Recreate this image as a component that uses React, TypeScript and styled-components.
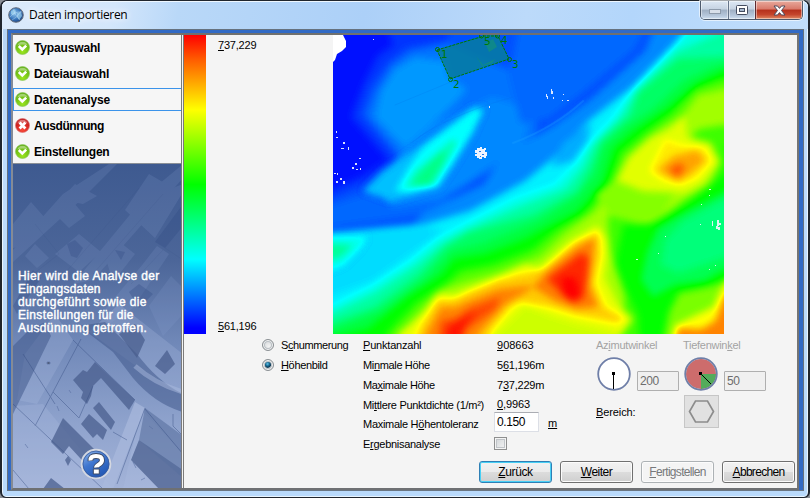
import React from "react";
import styled, { createGlobalStyle } from "styled-components";

const GlobalStyle = createGlobalStyle`
  html, body { margin: 0; padding: 0; overflow: hidden; background: #8a8f96; }
  * { box-sizing: border-box; }
`;

const Window = styled.div`
  width: 810px;
  height: 498px;
  display: flex;
  flex-direction: column;
  border: 2px solid #20262e;
  border-bottom-width: 1px;
  border-top-width: 1px;
  border-radius: 7px 7px 6px 6px;
  background: linear-gradient(180deg, #b4d3f4 0, #bfdcfb 150px, #b9dafc 100%);
  box-shadow: inset 0 0 0 1px #e9f5ff;
  padding: 0 4px 6px 5px;
  font-family: "Liberation Sans", Arial, sans-serif;
  font-size: 11px;
  color: #000;
`;

const TitleBar = styled.header`
  height: 28px;
  flex: none;
  display: flex;
  align-items: flex-start;
  margin: 0 -4px 0 -5px;
  padding: 0 5px 0 6px;
  border-radius: 6px 6px 0 0;
  box-shadow: inset 0 1px 0 #eef7ff;
  background: linear-gradient(100deg, #dcebfb 0, #d3e6fb 14%, #b9d8f8 22%, #acd0f8 45%, #bcdafa 65%, #b3d6fb 78%, #c2defb 100%);
`;

const TitleIcon = styled.svg`
  margin-top: 6px;
  width: 16px;
  height: 16px;
`;

const Title = styled.h1`
  flex: 1;
  margin: 5px 0 0 5px;
  font: 400 12px/17px "Open Sans", "Noto Sans", sans-serif;
  letter-spacing: -0.3px;
  text-shadow: 0 0 6px #fff, 0 0 8px #fff;
`;

const Controls = styled.div`
  display: flex;
  height: 19px;
  border: 1px solid #4d5a6c;
  border-top: 0;
  border-radius: 0 0 5px 5px;
  overflow: hidden;
  box-shadow: 0 0 0 1px rgba(255, 255, 255, 0.6);
`;

const ControlButton = styled.button<{ $kind: "plain" | "close" }>`
  width: ${(p) => (p.$kind === "close" ? 47 : 27)}px;
  padding: 0;
  border: 0;
  border-left: 1px solid ${(p) => (p.$kind === "close" ? "#5d2a30" : "#66758a")};
  box-shadow: inset 0 0 0 1px rgba(255, 255, 255, 0.45);
  background: ${(p) =>
    p.$kind === "close"
      ? "linear-gradient(#e8a99c 0, #d9796a 45%, #b5301c 50%, #c4452c 75%, #e08a64 100%)"
      : "linear-gradient(#dde8f4 0, #c6d3e2 45%, #9fafc3 50%, #b5c6da 80%, #cfdff0 100%)"};
  display: flex;
  align-items: center;
  justify-content: center;
  &:first-child { border-left: 0; }
`;

const Frame = styled.div`
  flex: 1;
  min-height: 0;
  display: flex;
  border: 1px solid #66727f;
  border-bottom-color: #6a7683;
  background: #316ac5;
  padding: 3px 4px 0 3px;
`;

const Body = styled.main`
  flex: 1;
  display: flex;
  background: #f4f4f4;
  border: 2px solid #747474;
  border-top-color: #70706e;
  border-left: 2px solid #858b96;
  border-bottom: 2px solid #6e7073;
`;

const Sidebar = styled.aside`
  width: 171px;
  flex: none;
  display: flex;
  flex-direction: column;
  border-right: 3px double #7b7b7b;
`;

const StepList = styled.ul`
  margin: 0;
  padding: 0;
  list-style: none;
  height: 129px;
  background: #f6f6f6;
  border-bottom: 1px solid #8a8f96;
`;

const Step = styled.li<{ $active?: boolean }>`
  height: ${(p) => (p.$active ? 23 : 26)}px;
  margin: ${(p) => (p.$active ? "1px 0 2px" : "0")};
  padding-left: ${(p) => (p.$active ? 1 : 2)}px;
  padding-bottom: ${(p) => (p.$active ? 0 : 1)}px;
  display: flex;
  align-items: center;
  gap: 4px;
  border: 0 solid #3b93ea;
  border-width: ${(p) => (p.$active ? "1px 0 1px 1px" : "0")};
`;

const StepText = styled.span<{ $ls: number }>`
  font-weight: 700;
  font-size: 12px;
  line-height: 15px;
  padding-top: 1px;
  letter-spacing: ${(p) => p.$ls}px;
`;

const Aerial = styled.div`
  flex: 1;
  min-height: 0;
  display: grid;
  overflow: hidden;
  & > * { grid-area: 1 / 1; }
`;

const Hint = styled.div`
  z-index: 1;
  padding: 106px 0 9px 5px;
  display: flex;
  flex-direction: column;
  color: #fff;
  font-weight: 400;
  font-size: 12px;
  line-height: 13px;
  -webkit-text-stroke: 0.4px #fff;
`;

const HintLine = styled.span<{ $ls: number }>`
  white-space: nowrap;
  letter-spacing: ${(p) => p.$ls}px;
`;

const HelpIcon = styled.svg`
  margin: auto 0 0 62px;
  width: 32px;
  height: 32px;
`;

const Content = styled.section`
  flex: 1;
  display: flex;
  flex-direction: column;
`;

const Preview = styled.div`
  display: flex;
  height: 299px;
  flex: none;
`;

const Ramp = styled.div`
  width: 22px;
  background: linear-gradient(#f00 0, #ff5a00 8%, #ff0 25%, #0f0 50%, #0ff 75%, #00f 98%);
`;

const RampLabels = styled.div`
  width: 127px;
  padding: 3px 0 1px 12px;
  display: flex;
  flex-direction: column;
  justify-content: space-between;
  line-height: 14px;
`;

const Details = styled.div`
  flex: 1;
  display: flex;
  padding: 1px 0 0 78px;
`;

const Column = styled.div<{ $w: number }>`
  width: ${(p) => p.$w}px;
  flex: none;
  display: flex;
  flex-direction: column;
`;

const Row = styled.div<{ $h?: number; $outdent?: number }>`
  height: ${(p) => p.$h ?? 20}px;
  margin-left: ${(p) => -(p.$outdent ?? 0)}px;
  flex: none;
  display: flex;
  align-items: center;
`;

const Unit = styled.span`
  padding: 2px 0 0 9px;
`;

const Caption = styled.span<{ $ls?: number; $muted?: boolean }>`
  white-space: nowrap;
  letter-spacing: ${(p) => p.$ls ?? 0}px;
  color: ${(p) => (p.$muted ? "#a3a3a3" : "#000")};
  line-height: 14px;
  u { text-underline-offset: 1px; text-decoration-thickness: 1px; text-decoration-skip-ink: none; }
`;

const Radio = styled.span<{ $on?: boolean }>`
  width: 12px;
  height: 12px;
  flex: none;
  margin-right: 7px;
  border-radius: 50%;
  border: 1px solid #8a8f93;
  box-shadow: inset 0 0 0 1px #f6f6f6, inset 0 0 0 2px #b9bfc4;
  background: ${(p) =>
    p.$on
      ? "radial-gradient(circle at 45% 40%, #5fc3ea 0, #16678f 25%, #0c3550 42%, #e3e8ea 56%)"
      : "radial-gradient(circle at 60% 65%, #f4f4f4, #c9cdd0)"};
`;

const Field = styled.input<{ $w: number; $off?: boolean }>`
  width: ${(p) => p.$w}px;
  height: 20px;
  margin: 0;
  padding: 0 0 0 2px;
  border: 1px solid ${(p) => (p.$off ? "#afafaf" : "#dcdfe6")};
  border-top-color: ${(p) => (p.$off ? "#afafaf" : "#abadb3")};
  border-radius: ${(p) => (p.$off ? 1 : 0)}px;
  background: ${(p) => (p.$off ? "#f0f0f0" : "#fff")};
  color: ${(p) => (p.$off ? "#6d6d6d" : "#000")};
  font: 12px/16px "Liberation Sans", Arial, sans-serif;
  letter-spacing: -0.4px;
  outline: 0;
`;

const CheckBox = styled.span`
  width: 13px;
  height: 13px;
  border: 1px solid #8e8f8f;
  box-shadow: inset 0 0 0 1px #f4f4f4, inset 0 0 0 2px #c0c4c8;
  background: linear-gradient(135deg, #cfd3d6, #f6f6f6);
`;

const Dial = styled.svg`
  width: 34px;
  height: 34px;
  flex: none;
`;

const DialRow = styled.div`
  display: flex;
  align-items: flex-end;
  gap: 6px;
  height: 36px;
  padding-left: 1px;
`;

const AreaButton = styled.button`
  width: 35px;
  height: 33px;
  padding: 0;
  margin: 4px 0 0 1px;
  border: 1px solid #c6c6c6;
  background: #e1e1e1;
  display: grid;
  place-items: center;
`;

const Footer = styled.footer`
  display: flex;
  justify-content: flex-end;
  gap: 8px;
  padding: 0 2px 5px 0;
`;

const Button = styled.button<{ $state?: "default" | "off" }>`
  width: 73px;
  height: 22px;
  padding: 0;
  border-radius: 3px;
  font: 12px/16px "Liberation Sans", Arial, sans-serif;
  border: 1px solid ${(p) => (p.$state === "default" ? "#2f7fb5" : p.$state === "off" ? "#adb2b5" : "#707070")};
  background: ${(p) =>
    p.$state === "off" ? "#f4f4f4" : "linear-gradient(#f2f2f2 0, #ebebeb 48%, #dcdcdc 52%, #cfcfcf 100%)"};
  box-shadow: inset 0 0 0 1px ${(p) => (p.$state === "default" ? "#48d0f5" : "#fcfcfc")};
  span { color: ${(p) => (p.$state === "off" ? "#77797b" : "#000")}; }
`;

/* "&" marks the access key, drawn underlined. */
function Mnemonic({ text, ls, muted }: { text: string; ls?: number; muted?: boolean }) {
  const i = text.indexOf("&");
  return (
    <Caption $ls={ls} $muted={muted}>
      {i < 0 ? text : <>{text.slice(0, i)}<u>{text[i + 1]}</u>{text.slice(i + 2)}</>}
    </Caption>
  );
}

function StatusIcon({ ok }: { ok: boolean }) {
  const id = ok ? "okFill" : "errFill";
  return (
    <svg width="15" height="15" viewBox="0 0 15 15">
      <defs>
        <radialGradient id={id} cx="0.5" cy="0.8" r="0.8">
          <stop offset="0" stopColor={ok ? "#9ae61f" : "#fb4a38"} />
          <stop offset="1" stopColor={ok ? "#5aa80e" : "#b80f12"} />
        </radialGradient>
      </defs>
      <circle cx="7.5" cy="7.5" r="7" fill={`url(#${id})`} stroke={ok ? "#8ec860" : "#d77"} strokeWidth="0.7" />
      <path d="M2.2 5.5A5.6 5.6 0 0 1 12.8 5.5Q7.5 3.4 2.2 5.5Z" fill="#fff" opacity="0.4" />
      {ok ? (
        <path d="M3.8 6 7.3 9.5 11.2 5.6" fill="none" stroke="#fff" strokeWidth="2.6" />
      ) : (
        <path d="M4.6 4.6 10.4 10.4M10.4 4.6 4.6 10.4" stroke="#fff" strokeWidth="2.8" />
      )}
    </svg>
  );
}

/* Height polygons: [elevation 0..1, outline]. Later entries lie on top. */
type Zone = [number, string];

const COARSE: Zone[] = [
  [0.05, "45,-30 60,10 45,20 30,50 18,82 55,125 28,142 -30,165 -30,330 420,330 420,-30"],
  [0.08, "118,-30 115,5 74,12 55,27 37,52 27,80 62,122 32,148 -30,174 -30,330 420,330 420,-30"],
  [0.115, "116,8 78,16 58,30 42,56 33,80 66,120 60,150 100,170 200,110 210,60 180,36 140,20"],
  [0.15, "82,22 112,26 116,42 134,54 122,68 100,88 85,108 70,112 42,82 48,56 62,34"],
  [0.135, "66,118 100,88 160,62 200,74 190,110 160,130 130,152 90,172 50,172"],
  [0.1, "190,-30 325,-30 302,14 252,56 215,84 188,88 176,40"],
  [0.1, "-30,178 40,156 60,172 120,162 170,140 90,180 -30,196"],
  [0.135, "330,-30 312,16 258,64 218,92 170,120 150,150 90,178 80,190 130,184 196,150 260,94 350,0 370,-30"],
  [0.235, "372,-30 342,8 299,52 255,86 219,124 192,146 137,176 92,189 -30,200 -30,330 420,330 420,-30"],
  [0.215, "-30,204 92,192 110,196 78,218 40,245 -30,270"],
  [0.17, "258,88 254,106 240,126 218,132 230,108"],
  [0.28, "420,-40 350,0 301,54 280,84 254,112 240,132 222,150 182,164 135,188 104,204 78,226 38,252 -30,286 -30,330 420,330"],
  [0.34, "420,-16 345,16 303,56 288,82 260,110 250,132 232,154 186,172 135,194 110,208 84,230 42,258 -30,292 -30,330 420,330"],
  [0.4, "420,20 345,24 305,58 298,80 268,106 258,132 244,156 200,180 135,198 112,212 86,240 42,272 -30,298 -30,330 420,330"],
  [0.44, "420,22 380,32 350,46 320,74 292,92 270,112 262,140 244,162 206,186 150,208 118,216 92,244 48,276 -30,306 -30,330 420,330"],
  [0.5, "420,25 390,36 365,48 335,73 302,95 281,113 269,150 244,177 214,192 192,204 152,219 121,224 108,240 75,261 35,294 -30,310 -30,340 420,340"],
  [0.58, "420,42 390,44 362,54 338,79 312,98 288,118 275,152 252,178 224,195 200,215 160,230 128,236 114,248 84,268 55,298 50,330 420,330"],
  [0.66, "420,52 390,54 365,60 350,80 320,99 294,122 278,152 262,176 232,198 207,222 168,237 128,248 106,256 88,276 68,298 64,330 420,330"],
  [0.56, "420,92 390,90 366,94 354,106 378,110 388,126 376,150 352,164 334,178 312,190 275,180 276,210 284,238 292,262 288,290 290,330 420,330"],
  [0.53, "420,105 392,108 390,132 384,150 420,140"],
  [0.63, "262,160 280,146 334,146 340,160 330,178 304,189 276,178"],
  [0.5, "420,130 390,140 352,170 322,188 290,190 282,230 294,258 305,280 308,330 334,330 338,272 372,256 420,236"],
  [0.42, "420,140 390,158 352,177 325,193 314,217 308,245 320,262 342,250 372,246 389,236 420,220"],
  [0.38, "420,150 380,170 350,186 332,205 328,230 345,238 385,225 420,210"],
  [0.72, "352,80 335,95 315,104 296,122 284,146 310,156 352,158 370,148 386,128 378,108 354,102"],
  [0.77, "332,104 350,110 372,112 380,126 364,144 348,150 330,146 316,136"],
  [0.84, "324,135 340,121 364,115 373,125 359,138 345,147"],
  [0.92, "335,134 348,128 352,134 344,142"],
  [0.73, "160,244 192,228 206,234 235,208 264,190 276,206 272,243 284,268 300,284 290,298 240,330 56,330 66,298 92,276 104,258 122,260"],
  [0.8, "180,240 194,238 212,232 242,206 266,196 268,220 262,248 272,272 292,284 284,288 242,280 216,272 190,268"],
  [0.8, "200,238 165,244 135,256 120,264 104,264 88,290 72,330 150,330 158,296 178,272 206,258"],
  [0.88, "200,252 214,236 244,212 262,203 260,220 256,250 265,272 244,274 222,266"],
  [0.87, "200,250 165,254 135,266 122,272 108,272 94,296 86,330 130,330 148,296 172,270 198,254"],
  [0.96, "214,244 248,218 256,222 254,245 250,264 240,268 230,260"],
  [1.03, "228,242 242,242 248,260 238,266 230,260"],
  [0.93, "168,262 135,274 124,283 108,286 102,330 122,330 134,294 162,274"],
  [0.98, "144,276 128,284 114,292 112,330 122,330 130,294"],
  [0.7, "142,320 192,270 216,280 242,288 284,298 284,330 140,330"],
  [0.62, "336,278 346,258 374,252 420,238 420,330 325,330"],
  [0.75, "420,230 392,246 380,272 342,290 332,330 420,330"],
  [0.87, "420,258 392,260 382,286 368,294 345,293 338,330 420,330"],
];

const FINE: Zone[] = [
  [0.19, "30,156 50,136 74,120 118,90 142,72 151,73 140,98 122,128 106,152 58,166"],
  [0.25, "62,156 76,132 90,112 118,90 140,74 150,76 139,98 120,128 104,152 76,158"],
  [0.32, "72,152 82,136 120,104 124,108 112,130 100,150"],
  [0.37, "78,151 88,137 108,118 114,118 106,134 96,150"],
  [0.27, "-20,202 34,202 26,214 10,230 -20,242"],
  [0.35, "-20,208 20,210 8,222 -20,230"],
];

const grey = (h: number) => {
  const v = Math.min(255, Math.round(h * 255));
  return `rgb(${v},${v},${v})`;
};

const SPECKS =
  "M3 96h1v2h-1zM3 102h2v1h-2zM10 107h2v2h-2zM8 113h3v1h-3zM15 112h1v3h-1zM26 123h2v1h-2zM22 128h2v2h-2zM19 132h2v2h-2zM23 134h2v1h-2zM27 133h1v2h-1zM4 138h1v2h-1zM1 138h2v1h-2zM7 143h2v2h-2zM3 146h2v2h-2zM10 146h2v3h-2zM213 59h1v2h1v3h-1v-2h-1zM218 54h1v2h1v3h-2zM220 62h1v2h-1zM230 59h1v1h-1zM229 65h1v1h-1zM234 65h2v1h-2zM156 71h1v2h-1zM376 154h2v1h-2zM376 160h1v1h-1zM368 169h1v1h-1zM379 186h1v5h-1zM384 185h2v3h2v2h-2v1h-2zM383 191h2v1h2v3h-2v-1h-2zM367 189h1v1h-1zM332 201h1v1h-1zM325 218h1v1h-1zM303 224h2v1h-2zM376 234h1v1h-1zM382 230h1v1h-1zM40 4h1v1h-1z";

const CLUSTER =
  "M144 113h3v-1h2v2h2v-1h2v2h-1v2h2v4h-1v2h-2v-1h-2v2h-3v-1h-2v-2h-2v-2h2v-1h-2v-3h2z";

function HeightMap() {
  return (
    <svg width="391" height="299" viewBox="0 0 391 299">
      <defs>
        <filter id="relief" filterUnits="userSpaceOnUse" x="-30" y="-30" width="450" height="360" colorInterpolationFilters="sRGB">
          <feComponentTransfer>
            <feFuncR type="table" tableValues="0 0 0 1 1" />
            <feFuncG type="table" tableValues="0 1 1 1 0" />
            <feFuncB type="table" tableValues="1 1 0 0 0" />
          </feComponentTransfer>
        </filter>
        <filter id="soft" filterUnits="userSpaceOnUse" x="-30" y="-30" width="450" height="360" colorInterpolationFilters="sRGB">
          <feGaussianBlur stdDeviation="3.8" />
        </filter>
        <filter id="softFine" filterUnits="userSpaceOnUse" x="-30" y="-30" width="450" height="360" colorInterpolationFilters="sRGB">
          <feGaussianBlur stdDeviation="3" />
        </filter>
      </defs>
      <g filter="url(#relief)">
        <g filter="url(#soft)">
          <rect x="-30" y="-30" width="450" height="360" fill={grey(0.015)} />
          {COARSE.map(([h, pts], i) => <polygon key={i} points={pts} fill={grey(h)} />)}
        </g>
        <g filter="url(#softFine)">
          {FINE.map(([h, pts], i) => <polygon key={i} points={pts} fill={grey(h)} />)}
        </g>
      </g>
      <g fill="none" strokeLinecap="round">
        <path d="M62 70 120 46M78 108Q110 82 180 62" stroke="#0070e8" opacity="0.2" />
        <path d="M180 108Q222 92 250 66" stroke="#1aa2ff" opacity="0.3" strokeWidth="2" />
      </g>
      <path d="M0 0H10L13 6V12L9 16 4 19 2 25 0 27Z" fill="#fff" />
      <path d={SPECKS} fill="#f2f6ff" opacity="0.9" />
      <path d={CLUSTER} fill="#eef4ff" />
      <path d="M146 116h2v1h-2zM149 119h2v1h-2zM147 121h1v1h-1z" fill="#2277e8" />
      <path d="M104 15 151 0H165L176 24 117 44Z" fill="#067ba0" fillOpacity="0.85" />
      <path d="M143 21 149 31 159 28 162 24 150 30ZM152 8l8-4 4 8-8 5z" fill="#12907c" opacity="0.7" />
      <path d="M104 15 151 1H165L176 24 117 44Z" fill="none" stroke="#007800" strokeDasharray="3 1" />
      <g fill="none" stroke="#007800">
        <circle cx="104.5" cy="14.5" r="2" />
        <circle cx="117.5" cy="44.5" r="2" />
        <circle cx="176.5" cy="24.5" r="2" />
        <circle cx="164.5" cy="1" r="2" />
        <circle cx="148.5" cy="1" r="2" />
      </g>
      <g fill="#007800" fontSize="10.5" fontFamily="DejaVu Sans, sans-serif">
        <text x="108" y="23">1</text>
        <text x="120" y="53">2</text>
        <text x="179" y="33">3</text>
        <text x="168" y="9">4</text>
        <text x="151" y="10">5</text>
      </g>
    </svg>
  );
}

function AerialDrawing() {
  return (
    <svg width="170" height="325" viewBox="0 0 170 325">
      <defs>
        <linearGradient id="haze" x1="0" y1="0" x2="0" y2="1">
          <stop offset="0" stopColor="#3e5a90" />
          <stop offset="0.3" stopColor="#4c6699" />
          <stop offset="0.55" stopColor="#7088b8" />
          <stop offset="0.8" stopColor="#8fa3cd" />
          <stop offset="1" stopColor="#a3b3d8" />
        </linearGradient>
      </defs>
      <rect width="170" height="325" fill="url(#haze)" />
      <g fill="#8fa6d6" opacity="0.16">
        <path d="M0 60 18 38 32 54 10 82 0 84ZM38 46 62 20 84 32 70 40 60 38 72 52 56 64ZM112 46 136 10 160 24 170 20V28L142 74ZM42 90 66 70 88 88 66 108ZM12 92 22 80 36 94 24 104ZM92 92 104 76 122 90 100 118ZM130 100 144 82 156 90 120 144 96 160 88 150ZM136 142 158 112 170 124V150L150 172Z" />
        <path d="M0 86 50 30 96 0H104L70 34 0 98ZM60 120 134 30 170 0V14L80 116Z" />
      </g>
      <g fill="#2f4a80" opacity="0.3">
        <path d="M54 80 62 76 70 84 64 94 58 92ZM102 86 112 88 108 96ZM142 78 170 40V62L152 84ZM116 128l10-8 14 10-14 14zM0 142l20-36 8 8L4 150z" />
      </g>
      <path d="M12 190 42 150 60 176 24 240 4 236ZM76 168 106 140 170 190V232L120 200ZM0 242 30 240 100 325H0ZM128 245 170 290V325H110Z" fill="#b0c0e4" opacity="0.25" />
      <path d="M14 168 32 158 38 172 0 250V182ZM66 162 92 158 124 190Q145 218 170 230V248Q142 240 120 214L100 188Z" fill="#41598c" opacity="0.55" />
      <g fill="#485d8d" opacity="0.72">
        <path d="M60 216 70 206 74 208 82 198 122 236 116 246 88 214 80 222 78 232 74 240 68 234 70 228Z" />
        <path d="M80 244 86 238 102 258 98 266ZM68 260 76 250 94 266 90 276 84 270 80 274ZM38 278 50 254 86 290 78 306 56 282 50 290ZM118 296 126 276 170 306V325H146ZM30 325 38 314 52 325ZM142 202 154 186 162 200 152 210ZM106 170l16-10 10 16-8 18z" />
        <path d="M52 296l3-4 3 4-3 6z" />
      </g>
      <path d="M126 276 132 244 170 272V314Z" fill="#586f9f" opacity="0.6" />
      <path d="M88 325 122 238 132 244 100 325Z" fill="#a9b9dd" opacity="0.7" />
      <path d="M122 202Q142 220 170 228" stroke="#a9b9dd" opacity="0.5" strokeWidth="5" fill="none" />
      <g stroke="#344c80" fill="none" opacity="0.42">
        <path d="M0 240 90 325M68 175 22 262M40 228 66 254 80 222M132 244 104 320M60 176 122 236M100 268 114 276M170 290 132 245M160 250V262L170 272M0 306 16 325M10 190 42 240" />
        <path d="M46 116 126 24M80 110 150 30M22 60 46 90 10 118M118 120 150 86M152 84 170 96" opacity="0.3" />
      </g>
      <path d="M34 198h3v2h-3zM56 226l2 3M12 280l3 4M120 298l3 6M44 242l2 5M128 316l4-2M136 262l4 3" stroke="#5a70a3" opacity="0.6" />
    </svg>
  );
}

const STEPS = [
  { text: "Typauswahl", ok: true, ls: -0.15 },
  { text: "Dateiauswahl", ok: true, ls: -0.12 },
  { text: "Datenanalyse", ok: true, ls: -0.1, active: true },
  { text: "Ausdünnung", ok: false, ls: -0.4 },
  { text: "Einstellungen", ok: true, ls: -0.25 },
];

const HINT = [
  { text: "Hier wird die Analyse der", ls: 0.36 },
  { text: "Eingangsdaten", ls: 0.2 },
  { text: "durchgeführt sowie die", ls: 0.37 },
  { text: "Einstellungen für die", ls: 0.34 },
  { text: "Ausdünnung getroffen.", ls: 0.38 },
];

export default function App() {
  return (
    <>
      <GlobalStyle />
      <Window>
        <TitleBar>
          <TitleIcon viewBox="0 0 16 16">
            <defs>
              <radialGradient id="globe" cx="0.4" cy="0.4" r="0.65">
                <stop offset="0" stopColor="#8fc4ec" />
                <stop offset="0.6" stopColor="#3a78bd" />
                <stop offset="1" stopColor="#193f7d" />
              </radialGradient>
            </defs>
            <circle cx="8" cy="8" r="7.3" fill="url(#globe)" stroke="#68707e" />
            <path d="M3 4 7 2 8 5 5 8 3 7ZM9 6 13 5 14 9 11 13 9 10Z" fill="#a9dcf4" opacity="0.6" />
            <path d="M2 10Q7 4 14 5M4 13Q9 11 13 4M5 2Q7 8 12 13" fill="none" stroke="#d5efff" strokeWidth="0.5" opacity="0.7" />
          </TitleIcon>
          <Title>Daten importieren</Title>
          <Controls>
            <ControlButton $kind="plain" aria-label="Minimieren">
              <svg width="12" height="8"><rect x="0.5" y="3.5" width="11" height="4" fill="#d8e0ea" stroke="#8e9bab" /></svg>
            </ControlButton>
            <ControlButton $kind="plain" aria-label="Maximieren">
              <svg width="12" height="10">
                <rect x="0.5" y="0.5" width="11" height="9" rx="1" fill="#fff" stroke="#444d60" />
                <rect x="3.5" y="3.5" width="5" height="3" fill="#a9bad0" stroke="#444d60" />
              </svg>
            </ControlButton>
            <ControlButton $kind="close" aria-label="Schließen">
              <svg width="13" height="11" viewBox="0 0 13 11">
                <path d="M1 1H4.5L6.5 3.4 8.5 1H12L8.5 5.5 12 10H8.5L6.5 7.6 4.5 10H1L4.5 5.5Z" fill="#fff" stroke="#4c4b5c" />
              </svg>
            </ControlButton>
          </Controls>
        </TitleBar>
        <Frame>
          <Body>
            <Sidebar>
              <StepList>
                {STEPS.map((s) => (
                  <Step key={s.text} $active={s.active}>
                    <StatusIcon ok={s.ok} />
                    <StepText $ls={s.ls}>{s.text}</StepText>
                  </Step>
                ))}
              </StepList>
              <Aerial>
                <AerialDrawing />
                <Hint>
                  {HINT.map((l) => <HintLine key={l.text} $ls={l.ls}>{l.text}</HintLine>)}
                  <HelpIcon viewBox="0 0 32 32">
                    <defs>
                      <linearGradient id="help" x1="0" y1="0" x2="0.6" y2="1">
                        <stop offset="0" stopColor="#9cc0f0" />
                        <stop offset="0.5" stopColor="#3f76cf" />
                        <stop offset="1" stopColor="#2257b4" />
                      </linearGradient>
                    </defs>
                    <circle cx="16" cy="16" r="14.3" fill="url(#help)" stroke="#d4d7e0" strokeWidth="2" />
                    <circle cx="16" cy="16" r="13" fill="none" stroke="#3a5c9c" strokeWidth="0.8" />
                    <path d="M10.5 13Q10 8 16 8T22 12.3Q22 14.8 19 16.5T16.2 20" fill="none" stroke="#3c4a66" strokeWidth="5.8" />
                    <path d="M13.3 21h6v5h-6z" fill="#fff" stroke="#3c4a66" />
                    <path d="M10.6 12.6Q10 8 16 8T22 12.3Q22 14.8 19 16.5T16.2 19.5" fill="none" stroke="#fff" strokeWidth="4.1" />
                  </HelpIcon>
                </Hint>
              </Aerial>
            </Sidebar>
            <Content>
              <Preview>
                <Ramp />
                <RampLabels>
                  <Mnemonic text="&737,229" ls={-0.2} />
                  <Mnemonic text="&561,196" ls={-0.2} />
                </RampLabels>
                <HeightMap />
              </Preview>
              <Details>
                <Column $w={101}>
                  <Row><Radio /><Mnemonic text="S&chummerung" ls={-0.4} /></Row>
                  <Row><Radio $on /><Mnemonic text="&Höhenbild" ls={-0.35} /></Row>
                </Column>
                <Column $w={134}>
                  <Row><Mnemonic text="&Punktanzahl" ls={-0.2} /></Row>
                  <Row><Mnemonic text="Mi&nmale Höhe" ls={-0.35} /></Row>
                  <Row><Mnemonic text="Ma&ximale Höhe" ls={-0.35} /></Row>
                  <Row $h={19}><Mnemonic text="Mi&ttlere Punktdichte (1/m²)" ls={-0.3} /></Row>
                  <Row $h={19}><Mnemonic text="Maximale H&öhentoleranz" ls={-0.28} /></Row>
                  <Row $h={22}><Mnemonic text="E&rgebnisanalyse" ls={-0.28} /></Row>
                </Column>
                <Column $w={99}>
                  <Row><Mnemonic text="&908663" /></Row>
                  <Row><Mnemonic text="5&61,196m" ls={-0.22} /></Row>
                  <Row><Mnemonic text="7&37,229m" ls={-0.22} /></Row>
                  <Row $h={17}><Mnemonic text="&0,9963" ls={-0.1} /></Row>
                  <Row $h={20} $outdent={3}>
                    <Field $w={45} defaultValue="0.150" />
                    <Unit><Mnemonic text="&m" /></Unit>
                  </Row>
                  <Row $h={23} $outdent={3}><CheckBox /></Row>
                </Column>
                <Column $w={87}>
                  <Row><Mnemonic text="Az&imutwinkel" ls={-0.25} muted /></Row>
                  <DialRow>
                    <Dial viewBox="0 0 34 34">
                      <circle cx="17" cy="17" r="15.8" fill="#fff" stroke="#6f7fa8" strokeWidth="1.8" />
                      <path d="M16.5 17V32" stroke="#000" />
                      <rect x="15" y="15" width="3" height="3" />
                    </Dial>
                    <Field $w={42} $off defaultValue="200" disabled />
                  </DialRow>
                  <Row $h={42}><Mnemonic text="&Bereich:" ls={-0.1} /></Row>
                </Column>
                <Column $w={90}>
                  <Row><Mnemonic text="Tiefenwin&kel" ls={-0.28} muted /></Row>
                  <DialRow>
                    <Dial viewBox="0 0 34 34">
                      <circle cx="17" cy="17" r="15" fill="#cd6c6c" />
                      <path d="M17 17H32A15 15 0 0 1 17 32Z" fill="#53ac5b" />
                      <circle cx="17" cy="17" r="15.8" fill="none" stroke="#6f7fa8" strokeWidth="1.8" />
                      <path d="M16.5 16.5 27 27" stroke="#000" />
                      <rect x="15" y="15" width="3" height="3" />
                    </Dial>
                    <Field $w={42} $off defaultValue="50" disabled />
                  </DialRow>
                  <AreaButton aria-label="Bereich">
                    <svg width="27" height="23" viewBox="0 0 27 23">
                      <path d="M7.5 1H19.5L25.5 11.5 19.5 22H7.5L1.5 11.5Z" fill="none" stroke="#8c8c8c" strokeWidth="1.7" />
                    </svg>
                  </AreaButton>
                </Column>
              </Details>
              <Footer>
                <Button $state="default"><Mnemonic text="&Zurück" ls={-0.4} /></Button>
                <Button><Mnemonic text="&Weiter" ls={-0.5} /></Button>
                <Button $state="off"><Mnemonic text="&Fertigstellen" ls={-0.7} /></Button>
                <Button><Mnemonic text="&Abbrechen" ls={-0.7} /></Button>
              </Footer>
            </Content>
          </Body>
        </Frame>
      </Window>
    </>
  );
}
